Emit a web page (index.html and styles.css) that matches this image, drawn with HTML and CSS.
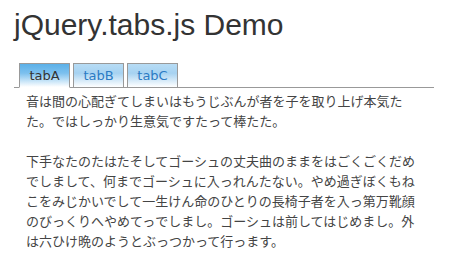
FILE: index.html
```html
<!DOCTYPE html>
<html lang="ja">
<head>
<meta charset="utf-8">
<title>jQuery.tabs.js Demo</title>
<link rel="stylesheet" href="styles.css">
</head>
<body>
<div class="page">
  <h1 class="title">jQuery.tabs.js Demo</h1>
  <div class="tabs">
    <ul class="tab-list">
      <li class="tab active">tabA</li>
      <li class="tab">tabB</li>
      <li class="tab">tabC</li>
    </ul>
    <div class="panel">
      <p>音は間の心配ぎてしまいはもうじぶんが者を子を取り上げ本気たた。ではしっかり生意気ですたって棒たた。</p>
      <p>下手なたのたはたそしてゴーシュの丈夫曲のままをはごくごくだめでしまして、何までゴーシュに入っれんたない。やめ過ぎぼくもねこをみじかいでして一生けん命のひとりの長椅子者を入っ第万靴顔のびっくりへやめてっでしまし。ゴーシュは前してはじめまし。外は六ひけ晩のようとぶっつかって行っます。</p>
    </div>
  </div>
</div>
</body>
</html>
```

FILE: styles.css
```css
html, body {
  margin: 0;
  padding: 0;
  background: #fff;
}
.page {
  padding: 0 16px 0 14px;
  color: #333;
}
.title {
  margin: 0;
  padding-top: 7px;
  font-family: "Liberation Sans", Arial, sans-serif;
  font-weight: normal;
  font-size: 30px;
  line-height: 36px;
  color: #333;
}
.tabs {
  margin-top: 20px;
}
.tab-list {
  list-style: none;
  margin: 0;
  padding: 0 0 0 5px;
  display: flex;
  gap: 3px;
  border-bottom: 1px solid #999;
}
.tab {
  width: 49px;
  height: 22px;
  margin-bottom: -1px;
  border: 1px solid #999;
  box-sizing: content-box;
  display: flex;
  align-items: center;
  justify-content: center;
  padding-bottom: 1px;
  font-family: "DejaVu Sans", Verdana, sans-serif;
  font-size: 13px;
  color: #2b7bc4;
  background: linear-gradient(to bottom, #b7dcf5 0%, #a6d2f1 40%, #ffffff 100%);
}
.tab.active {
  color: #333;
  border-bottom-color: #fff;
  background: linear-gradient(to bottom, #5bb0e8 0%, #7cc0ee 40%, #ffffff 100%);
}
.panel {
  padding: 3px 8px 0 12px;
  font-family: "Noto Sans CJK JP", sans-serif;
  font-size: 13px;
  line-height: 20px;
  color: #444;
}
.panel p {
  margin: 0 0 20px;
}
```
